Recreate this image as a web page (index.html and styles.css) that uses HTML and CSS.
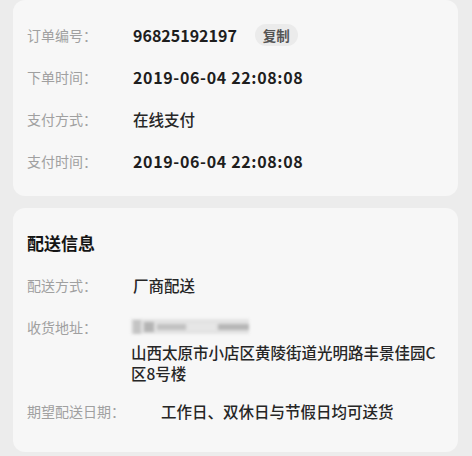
FILE: index.html
```html
<!DOCTYPE html>
<html lang="zh">
<head>
<meta charset="utf-8">
<link rel="stylesheet" href="styles.css">
</head>
<body>
<div class="page">
  <section class="card card-order">
    <div class="row">
      <span class="label">订单编号：</span>
      <span class="value num">96825192197</span>
      <span class="copy">复制</span>
    </div>
    <div class="row">
      <span class="label">下单时间：</span>
      <span class="value num date">2019-06-04 22:08:08</span>
    </div>
    <div class="row">
      <span class="label">支付方式：</span>
      <span class="value">在线支付</span>
    </div>
    <div class="row">
      <span class="label">支付时间：</span>
      <span class="value num date">2019-06-04 22:08:08</span>
    </div>
  </section>

  <section class="card card-ship">
    <h2 class="title">配送信息</h2>
    <div class="row">
      <span class="label">配送方式：</span>
      <span class="value">厂商配送</span>
    </div>
    <div class="row row-top">
      <span class="label">收货地址：</span>
      <div class="addr">
        <div class="blur-line">
          <span class="b b1"></span><span class="b b2"></span><span class="b b3"></span><span class="b b4"></span><span class="b b5"></span>
        </div>
        <div class="addr-text">山西太原市小店区黄陵街道光明路丰景佳园C区8号楼</div>
      </div>
    </div>
    <div class="row row-date">
      <span class="label">期望配送日期：</span>
      <span class="value">工作日、双休日与节假日均可送货</span>
    </div>
  </section>
</div>
</body>
</html>
```

FILE: styles.css
```css
* { box-sizing: border-box; }
html, body {
  margin: 0;
  padding: 0;
  background: #ececec;
  font-family: "Noto Sans CJK SC", "Noto Sans", sans-serif;
}
.page {
  padding: 0 14px 0 13px;
  display: flex;
  flex-direction: column;
  gap: 12px;
}
.card {
  background: #f7f7f7;
  border-radius: 12px;
  padding: 0 14px 0 14px;
}
.card-order {
  height: 196px;
  padding-top: 14px;
}
.card-ship {
  height: 244px;
  padding-top: 14px;
}
.row {
  display: flex;
  align-items: center;
  height: 42px;
}
.label {
  font-size: 14px;
  color: #a0a0a0;
  margin-right: 36px;
  white-space: nowrap;
  line-height: 42px;
}
.value {
  font-size: 15.5px;
  color: #262626;
  font-weight: 500;
}
.num {
  font-size: 16px;
  font-weight: 700;
  color: #1e1e1e;
}
.date {
  letter-spacing: 0.65px;
}
.copy {
  margin-left: 18px;
  height: 22px;
  padding: 0 8px;
  border-radius: 11px;
  background: #ebebeb;
  color: #555;
  font-size: 13.5px;
  font-weight: 700;
  line-height: 22px;
}
.title {
  margin: 0;
  height: 42px;
  line-height: 42px;
  font-size: 17px;
  font-weight: 700;
  color: #151515;
}
.row-top {
  align-items: flex-start;
  height: auto;
}
.addr {
  display: flex;
  flex-direction: column;
  flex: 1;
  margin-left: -2px;
}
.blur-line {
  margin-top: 13px;
  width: 118px;
  height: 15px;
  display: flex;
  align-items: center;
  gap: 3px;
  background: #e3e3e3;
  filter: blur(1.6px);
  padding-left: 2px;
}
.b { display: block; height: 6px; background: #bdbdbd; }
.b1 { width: 8px; background: #c4c4c4; height: 14px; }
.b2 { width: 10px; background: #b4b4b4; height: 10px; }
.b3 { width: 30px; background: #c2c2c2; }
.b4 { width: 26px; background: #e6e6e6; }
.b5 { width: 32px; background: #b6b6b6; }
.addr-text {
  margin-top: 8px;
  font-size: 15.5px;
  line-height: 21px;
  color: #262626;
  font-weight: 500;
}
.row-date {
  margin-top: 6px;
}
```
